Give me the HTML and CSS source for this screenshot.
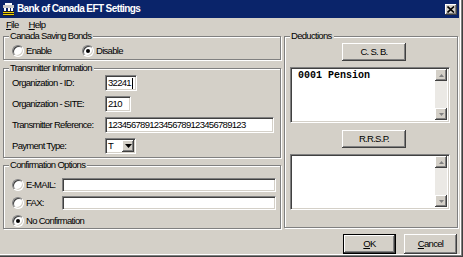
FILE: index.html
```html
<!DOCTYPE html>
<html>
<head>
<meta charset="utf-8">
<link rel="stylesheet" href="styles.css">
</head>
<body>
<div class="window">
  <div class="titlebar">
    <svg class="appicon" width="13" height="13" viewBox="0 0 13 13">
      <rect x="3" y="0" width="7" height="2" fill="#ffffff"/>
      <rect x="1" y="2" width="11" height="3" fill="#c8c8c8"/>
      <rect x="2" y="5" width="2" height="3" fill="#ffffff"/>
      <rect x="6" y="5" width="2" height="3" fill="#ffffff"/>
      <rect x="9" y="5" width="2" height="3" fill="#ffffff"/>
      <rect x="1" y="8" width="11" height="1" fill="#222"/>
      <rect x="1" y="9" width="11" height="1" fill="#f0d000"/>
      <rect x="1" y="10" width="11" height="1" fill="#222"/>
      <rect x="1" y="11" width="11" height="1" fill="#f0d000"/>
      <rect x="1" y="12" width="11" height="1" fill="#222"/>
    </svg>
    <span class="title">Bank of Canada EFT Settings</span>
    <div class="closebtn">
      <svg width="8" height="7" viewBox="0 0 8 7"><path d="M0.5 0.5 L7 6.5 M7 0.5 L0.5 6.5" stroke="#000" stroke-width="1.6"/></svg>
    </div>
  </div>
  <div class="menubar">
    <span class="menuitem"><u>F</u>ile</span>
    <span class="menuitem"><u>H</u>elp</span>
  </div>
  <div class="content">
    <div class="leftcol">
      <div class="group csb">
        <div class="legend">Canada Saving Bonds</div>
        <div class="radiorow">
          <div class="radio first"><span class="dot"></span><span>Enable</span></div>
          <div class="radio"><span class="dot checked"></span><span>Disable</span></div>
        </div>
      </div>
      <div class="group trans">
        <div class="legend">Transmitter Information</div>
        <div class="form">
          <div class="lbl">Organization - ID:</div>
          <div class="field w-id"><span>32241</span><span class="caret"></span></div>
          <div class="lbl">Organization - SITE:</div>
          <div class="field w-site">210</div>
          <div class="lbl">Transmitter Reference:</div>
          <div class="field w-ref">123456789123456789123456789123</div>
          <div class="lbl">Payment Type:</div>
          <div class="field combo"><span class="combotext">T</span><span class="dropbtn"><svg width="7" height="4" viewBox="0 0 7 4"><path d="M0 0 H7 L3.5 4 Z" fill="#000"/></svg></span></div>
        </div>
      </div>
      <div class="group conf">
        <div class="legend">Confirmation Options</div>
        <div class="confrows">
          <div class="confrow"><div class="radio clbl"><span class="dot"></span><span>E-MAIL:</span></div><div class="field w-conf"></div></div>
          <div class="confrow"><div class="radio clbl"><span class="dot"></span><span>FAX:</span></div><div class="field w-conf"></div></div>
          <div class="confrow"><div class="radio"><span class="dot checked"></span><span>No Confirmation</span></div></div>
        </div>
      </div>
    </div>
    <div class="rightcol">
      <div class="group ded">
        <div class="legend">Deductions</div>
        <div class="btn dbtn first-btn">C. S. B.</div>
        <div class="listbox">
          <div class="listitems"><div class="item">0001 Pension</div></div>
          <div class="vscroll">
            <div class="sbtn"><svg width="5" height="3" viewBox="0 0 5 3"><path d="M2.5 0 L5 3 H0 Z" fill="#808080"/></svg></div>
            <div class="track"></div>
            <div class="sbtn"><svg width="5" height="3" viewBox="0 0 5 3"><path d="M0 0 H5 L2.5 3 Z" fill="#808080"/></svg></div>
          </div>
        </div>
        <div class="btn dbtn">R.R.S.P.</div>
        <div class="listbox">
          <div class="listitems"></div>
          <div class="vscroll">
            <div class="sbtn"><svg width="5" height="3" viewBox="0 0 5 3"><path d="M2.5 0 L5 3 H0 Z" fill="#808080"/></svg></div>
            <div class="track"></div>
            <div class="sbtn"><svg width="5" height="3" viewBox="0 0 5 3"><path d="M0 0 H5 L2.5 3 Z" fill="#808080"/></svg></div>
          </div>
        </div>
      </div>
    </div>
  </div>
  <div class="footer">
    <div class="btn fbtn default"><span><u>O</u>K</span></div>
    <div class="btn fbtn"><span><u>C</u>ancel</span></div>
  </div>
</div>
</body>
</html>
```

FILE: styles.css
```css
html, body {
  margin: 0;
  padding: 0;
  background: #d4d0c8;
}
.window {
  width: 463px;
  height: 257px;
  box-sizing: border-box;
  background: #d4d0c8;
  padding: 0 4px 4px 0;
  box-shadow: inset -1px -1px #404040, inset -2px -2px #808080, inset -3px -3px #fff;
  font-family: "Liberation Sans", Arial, sans-serif;
  font-size: 9.5px;
  letter-spacing: -0.7px;
  color: #000;
  display: flex;
  flex-direction: column;
}
.titlebar {
  height: 18px;
  background: #0a246a;
  display: flex;
  align-items: center;
  padding-left: 2px;
  color: #fff;
}
.appicon {
  display: block;
  margin-top: 1px;
}
.title {
  font-weight: bold;
  font-size: 10px;
  letter-spacing: -0.6px;
  margin-left: 2px;
  line-height: 18px;
}
.closebtn {
  margin-left: auto;
  margin-right: 2px;
  width: 12px;
  height: 11px;
  box-sizing: border-box;
  background: #d4d0c8;
  box-shadow: inset -1px -1px #404040, inset 1px 1px #fff, inset -2px -2px #808080;
  display: flex;
  align-items: center;
  justify-content: center;
}
.closebtn svg { display: block; margin-left: -1px; }
.menubar {
  height: 13px;
  display: flex;
  align-items: center;
  padding-left: 6px;
  gap: 10px;
  line-height: 13px;
}
.content {
  display: flex;
  padding-left: 3px;
  gap: 3px;
  margin-top: 5px;
}
.leftcol {
  width: 278px;
  display: flex;
  flex-direction: column;
}
.rightcol {
  width: 174px;
  display: flex;
  flex-direction: column;
}
.group {
  box-sizing: border-box;
  border: 1px solid #808080;
  box-shadow: inset 1px 1px #fff, 1px 1px #fff;
  display: flex;
  flex-direction: column;
}
.legend {
  margin-top: -7px;
  margin-left: 5px;
  background: #d4d0c8;
  padding: 0 2px 0 1px;
  width: fit-content;
  line-height: 11px;
  height: 11px;
  white-space: nowrap;
}
.csb { height: 24px; }
.trans { height: 90px; margin-top: 8px; }
.conf { height: 64px; margin-top: 7px; }
.ded { height: 192px; }

.radiorow {
  display: flex;
  padding-left: 8px;
  margin-top: 4px;
}
.radio {
  display: flex;
  align-items: center;
  gap: 2px;
  height: 12px;
  line-height: 12px;
  white-space: nowrap;
}
.radio.first { width: 70px; }
.dot {
  width: 12px;
  height: 12px;
  box-sizing: border-box;
  border-radius: 50%;
  background: #fff;
  border: 1px solid;
  border-color: #808080 #fff #fff #808080;
  box-shadow: inset 1px 1px #404040, inset -1px -1px #d4d0c8;
  position: relative;
  flex: none;
}
.dot.checked::after {
  content: "";
  position: absolute;
  left: 3px;
  top: 3px;
  width: 4px;
  height: 4px;
  border-radius: 50%;
  background: #000;
}
.form {
  display: grid;
  grid-template-columns: 93px auto;
  row-gap: 5px;
  padding-left: 8px;
  margin-top: 2px;
  align-items: center;
  justify-items: start;
}
.lbl { line-height: 16px; white-space: nowrap; }
.field {
  box-sizing: border-box;
  height: 16px;
  background: #fff;
  border: 1px solid;
  border-color: #808080 #fff #fff #808080;
  box-shadow: inset 1px 1px #404040, inset -1px -1px #d4d0c8;
  padding: 0 2px;
  line-height: 14px;
  display: flex;
  align-items: center;
  white-space: nowrap;
  overflow: hidden;
}
.w-id { width: 32px; }
.w-site { width: 26px; }
.w-ref { width: 169px; }
.caret {
  width: 1px;
  height: 11px;
  background: #000;
  margin-left: 1px;
}
.combo {
  width: 31px;
  padding: 0 2px 0 2px;
}
.combotext { flex: 1; }
.dropbtn {
  width: 12px;
  height: 12px;
  box-sizing: border-box;
  background: #d4d0c8;
  box-shadow: inset -1px -1px #404040, inset 1px 1px #fff, inset -2px -2px #808080;
  display: flex;
  align-items: center;
  justify-content: center;
  margin-right: -1px;
}
.dropbtn svg { display: block; }
.confrows {
  display: flex;
  flex-direction: column;
  gap: 3px;
  padding-left: 8px;
  margin-top: 7px;
}
.confrow {
  display: flex;
  align-items: center;
  height: 15px;
}
.clbl { width: 50px; }
.w-conf { width: 214px; height: 14px; }

.btn {
  box-sizing: border-box;
  background: #d4d0c8;
  box-shadow: inset -1px -1px #404040, inset 1px 1px #fff, inset -2px -2px #808080;
  display: flex;
  align-items: center;
  justify-content: center;
  line-height: 12px;
  white-space: nowrap;
}
.dbtn {
  width: 64px;
  height: 18px;
  margin-left: 57px;
  margin-top: 7px;
}
.first-btn { margin-top: 2px; }
.listbox {
  width: 160px;
  height: 56px;
  margin-left: 5px;
  margin-top: 6px;
  box-sizing: border-box;
  background: #fff;
  border: 1px solid;
  border-color: #808080 #fff #fff #808080;
  box-shadow: inset 1px 1px #404040, inset -1px -1px #d4d0c8;
  padding: 1px 2px 2px 1px;
  display: flex;
}
.listitems {
  flex: 1;
  padding: 1px 0 0 6px;
}
.item {
  font-family: "Liberation Mono", "Courier New", monospace;
  font-weight: bold;
  font-size: 10px;
  letter-spacing: 0;
  line-height: 11px;
}
.vscroll {
  width: 12px;
  display: flex;
  flex-direction: column;
}
.sbtn {
  height: 12px;
  box-sizing: border-box;
  background: #d4d0c8;
  box-shadow: inset -1px -1px #404040, inset 1px 1px #fff, inset -2px -2px #808080;
  display: flex;
  align-items: center;
  justify-content: center;
}
.sbtn svg { display: block; }
.track {
  flex: 1;
  background: #ebe9e5;
}
.footer {
  display: flex;
  justify-content: flex-end;
  gap: 8px;
  margin-top: 5px;
  padding-right: 2px;
}
.fbtn {
  width: 53px;
  height: 20px;
}
.fbtn.default {
  border: 1px solid #000;
}
```
